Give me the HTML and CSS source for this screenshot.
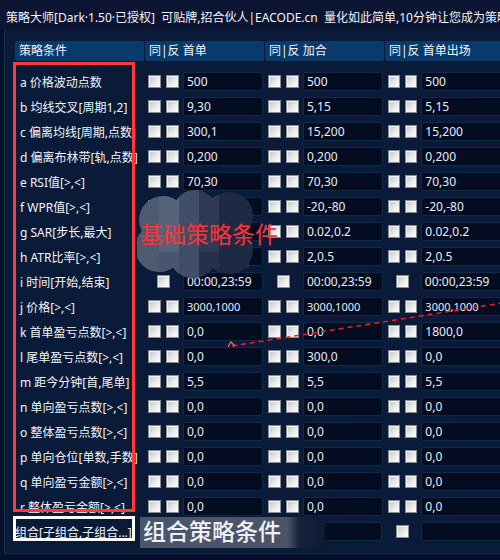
FILE: index.html
```html
<!DOCTYPE html>
<html lang="zh-CN">
<head>
    <meta charset="UTF-8">
    <title>策略大师</title>
    <link rel="stylesheet" href="styles.css">
</head>
<body>
    <div class="titlebar">策略大师[Dark·1.50·已授权]&nbsp; 可贴牌,招合伙人|EACODE.cn&nbsp; 量化如此简单,10分钟让您成为策略大师</div>

    <div class="panel">
        <div class="head">
            <div class="head-cell">策略条件</div>
            <div class="head-cell">同|反 首单</div>
            <div class="head-cell">同|反 加合</div>
            <div class="head-cell">同|反 首单出场</div>
        </div>

        <div class="rows">
            <div class="row">
                <div class="label">a 价格波动点数</div>
                <div class="grp"><span class="cb"></span><span class="cb"></span><span class="inp">500</span></div>
                <div class="grp"><span class="cb"></span><span class="cb"></span><span class="inp">500</span></div>
                <div class="grp"><span class="cb"></span><span class="cb"></span><span class="inp">500</span></div>
            </div>
            <div class="row">
                <div class="label">b 均线交叉[周期1,2]</div>
                <div class="grp"><span class="cb"></span><span class="cb"></span><span class="inp">9,30</span></div>
                <div class="grp"><span class="cb"></span><span class="cb"></span><span class="inp">5,15</span></div>
                <div class="grp"><span class="cb"></span><span class="cb"></span><span class="inp">5,15</span></div>
            </div>
            <div class="row">
                <div class="label">c 偏离均线[周期,点数]</div>
                <div class="grp"><span class="cb"></span><span class="cb"></span><span class="inp">300,1</span></div>
                <div class="grp"><span class="cb"></span><span class="cb"></span><span class="inp">15,200</span></div>
                <div class="grp"><span class="cb"></span><span class="cb"></span><span class="inp">15,200</span></div>
            </div>
            <div class="row">
                <div class="label">d 偏离布林带[轨,点数]</div>
                <div class="grp"><span class="cb"></span><span class="cb"></span><span class="inp">0,200</span></div>
                <div class="grp"><span class="cb"></span><span class="cb"></span><span class="inp">0,200</span></div>
                <div class="grp"><span class="cb"></span><span class="cb"></span><span class="inp">0,200</span></div>
            </div>
            <div class="row">
                <div class="label">e RSI值[&gt;,&lt;]</div>
                <div class="grp"><span class="cb"></span><span class="cb"></span><span class="inp">70,30</span></div>
                <div class="grp"><span class="cb"></span><span class="cb"></span><span class="inp">70,30</span></div>
                <div class="grp"><span class="cb"></span><span class="cb"></span><span class="inp">70,30</span></div>
            </div>
            <div class="row">
                <div class="label">f WPR值[&gt;,&lt;]</div>
                <div class="grp"><span class="cb"></span><span class="cb"></span><span class="inp">-20,-80</span></div>
                <div class="grp"><span class="cb"></span><span class="cb"></span><span class="inp">-20,-80</span></div>
                <div class="grp"><span class="cb"></span><span class="cb"></span><span class="inp">-20,-80</span></div>
            </div>
            <div class="row">
                <div class="label">g SAR[步长,最大]</div>
                <div class="grp"><span class="cb"></span><span class="cb"></span><span class="inp">0.02,0.2</span></div>
                <div class="grp"><span class="cb"></span><span class="cb"></span><span class="inp">0.02,0.2</span></div>
                <div class="grp"><span class="cb"></span><span class="cb"></span><span class="inp">0.02,0.2</span></div>
            </div>
            <div class="row">
                <div class="label">h ATR比率[&gt;,&lt;]</div>
                <div class="grp"><span class="cb"></span><span class="cb"></span><span class="inp">2,0.5</span></div>
                <div class="grp"><span class="cb"></span><span class="cb"></span><span class="inp">2,0.5</span></div>
                <div class="grp"><span class="cb"></span><span class="cb"></span><span class="inp">2,0.5</span></div>
            </div>
            <div class="row">
                <div class="label">i 时间[开始,结束]</div>
                <div class="grp"><span class="cb-slot"><span class="cb"></span></span><span class="inp">00:00,23:59</span></div>
                <div class="grp"><span class="cb-slot"><span class="cb"></span></span><span class="inp">00:00,23:59</span></div>
                <div class="grp"><span class="cb-slot"><span class="cb"></span></span><span class="inp">00:00,23:59</span></div>
            </div>
            <div class="row">
                <div class="label">j 价格[&gt;,&lt;]</div>
                <div class="grp"><span class="cb"></span><span class="cb"></span><span class="inp small">3000,1000</span></div>
                <div class="grp"><span class="cb"></span><span class="cb"></span><span class="inp small">3000,1000</span></div>
                <div class="grp"><span class="cb"></span><span class="cb"></span><span class="inp small">3000,1000</span></div>
            </div>
            <div class="row">
                <div class="label">k 首单盈亏点数[&gt;,&lt;]</div>
                <div class="grp"><span class="cb"></span><span class="cb"></span><span class="inp">0,0</span></div>
                <div class="grp"><span class="cb"></span><span class="cb"></span><span class="inp">0,0</span></div>
                <div class="grp"><span class="cb"></span><span class="cb"></span><span class="inp">1800,0</span></div>
            </div>
            <div class="row">
                <div class="label">l 尾单盈亏点数[&gt;,&lt;]</div>
                <div class="grp"><span class="cb"></span><span class="cb"></span><span class="inp">0,0</span></div>
                <div class="grp"><span class="cb"></span><span class="cb"></span><span class="inp">300,0</span></div>
                <div class="grp"><span class="cb"></span><span class="cb"></span><span class="inp">0,0</span></div>
            </div>
            <div class="row">
                <div class="label">m 距今分钟[首,尾单]</div>
                <div class="grp"><span class="cb"></span><span class="cb"></span><span class="inp">5,5</span></div>
                <div class="grp"><span class="cb"></span><span class="cb"></span><span class="inp">5,5</span></div>
                <div class="grp"><span class="cb"></span><span class="cb"></span><span class="inp">5,5</span></div>
            </div>
            <div class="row">
                <div class="label">n 单向盈亏点数[&gt;,&lt;]</div>
                <div class="grp"><span class="cb"></span><span class="cb"></span><span class="inp">0,0</span></div>
                <div class="grp"><span class="cb"></span><span class="cb"></span><span class="inp">0,0</span></div>
                <div class="grp"><span class="cb"></span><span class="cb"></span><span class="inp">0,0</span></div>
            </div>
            <div class="row">
                <div class="label">o 整体盈亏点数[&gt;,&lt;]</div>
                <div class="grp"><span class="cb"></span><span class="cb"></span><span class="inp">0,0</span></div>
                <div class="grp"><span class="cb"></span><span class="cb"></span><span class="inp">0,0</span></div>
                <div class="grp"><span class="cb"></span><span class="cb"></span><span class="inp">0,0</span></div>
            </div>
            <div class="row">
                <div class="label">p 单向仓位[单数,手数]</div>
                <div class="grp"><span class="cb"></span><span class="cb"></span><span class="inp">0,0</span></div>
                <div class="grp"><span class="cb"></span><span class="cb"></span><span class="inp">0,0</span></div>
                <div class="grp"><span class="cb"></span><span class="cb"></span><span class="inp">0,0</span></div>
            </div>
            <div class="row">
                <div class="label">q 单向盈亏金额[&gt;,&lt;]</div>
                <div class="grp"><span class="cb"></span><span class="cb"></span><span class="inp">0,0</span></div>
                <div class="grp"><span class="cb"></span><span class="cb"></span><span class="inp">0,0</span></div>
                <div class="grp"><span class="cb"></span><span class="cb"></span><span class="inp">0,0</span></div>
            </div>
            <div class="row">
                <div class="label">r 整体盈亏金额[&gt;,&lt;]</div>
                <div class="grp"><span class="cb"></span><span class="cb"></span><span class="inp">0,0</span></div>
                <div class="grp"><span class="cb"></span><span class="cb"></span><span class="inp">0,0</span></div>
                <div class="grp"><span class="cb"></span><span class="cb"></span><span class="inp">0,0</span></div>
            </div>
            <div class="row combo">
                <div class="label">组合[子组合,子组合...]</div>
                <div class="grp wide"><span class="inp"></span></div>
                <div class="grp"><span class="cb-slot"><span class="cb"></span></span><span class="inp"></span></div>
            </div>
        </div>
    </div>

    <!-- annotations drawn over the form -->
    <div class="mark-red"></div>
    <div class="mark-white"></div>

    <svg class="smudge" width="120" height="90" viewBox="0 0 120 90">
        <defs>
            <clipPath id="cloud">
                <circle cx="26" cy="30" r="24"/>
                <circle cx="58" cy="22" r="22"/>
                <circle cx="92" cy="26" r="24"/>
                <circle cx="22" cy="58" r="24"/>
                <circle cx="56" cy="64" r="24"/>
                <circle cx="92" cy="60" r="24"/>
                <rect x="12" y="12" width="100" height="66"/>
            </clipPath>
        </defs>
        <g clip-path="url(#cloud)">
            <rect x="0" y="0" width="22" height="90" fill="#4d5a72"/>
            <rect x="22" y="0" width="20" height="90" fill="#56637b"/>
            <rect x="22" y="62" width="20" height="28" fill="#48556d"/>
            <rect x="42" y="0" width="20" height="90" fill="#414e67"/>
            <rect x="62" y="0" width="20" height="90" fill="#2e3a54"/>
            <rect x="82" y="0" width="38" height="90" fill="#1e2a44"/>
            <rect x="62" y="62" width="20" height="28" fill="#25314b"/>
        </g>
    </svg>
    <div class="note-red">基础策略条件</div>

    <div class="note-box"></div>
    <div class="note-white">组合策略条件</div>

    <svg class="pointer" width="280" height="60" viewBox="0 0 280 60">
        <line x1="4" y1="50" x2="280" y2="6" stroke="#ff1a1a" stroke-width="1.5" stroke-dasharray="5 4"/>
        <polyline points="0,51 3,46 7,50" fill="none" stroke="#ff6a6a" stroke-width="1.2"/>
    </svg>
</body>
</html>
```

FILE: styles.css
```css
:root {
    --body-bg: #07102a;
    --title-bg: #0c1531;
    --panel-bg: #0a1a39;
    --panel-border: #172b4c;
    --head-bg: #083b6b;
    --input-bg: #040c21;
    --input-border: #0d2d46;
    --text: #f2f4f8;
    --value: #e4edfb;
}

html, body {
    margin: 0;
    padding: 0;
}

body {
    position: relative;
    width: 500px;
    height: 560px;
    overflow: hidden;
    background-color: var(--body-bg);
    color: var(--text);
    font-family: "Noto Sans", "Noto Sans CJK SC", sans-serif;
    font-size: 12px;
}

.titlebar {
    height: 30px;
    line-height: 36px;
    padding-left: 6px;
    background-color: var(--title-bg);
    white-space: nowrap;
    overflow: hidden;
}

.panel {
    margin-left: 4px;
    height: 524px;
    padding: 10px 0 0 10px;
    box-sizing: border-box;
    border-left: 1px solid var(--panel-border);
    border-bottom: 1px solid var(--panel-border);
    background-color: var(--panel-bg);
}

.head {
    display: grid;
    grid-template-columns: 130px 120px 120px 120px;
    height: 20px;
    margin-top: 1px;
}

.head-cell {
    background-color: var(--head-bg);
    margin-right: 1px;
    padding-left: 4px;
    line-height: 20px;
    border-radius: 2px;
    white-space: nowrap;
}

.rows {
    margin-top: 8px;
}

.row {
    display: grid;
    grid-template-columns: 130px 120px 120px 120px;
    height: 25px;
    align-items: center;
}

.label {
    padding-left: 5px;
    white-space: nowrap;
    overflow: hidden;
    width: 120px;
}

.combo .label {
    padding-left: 0;
}

.grp {
    display: flex;
    align-items: center;
    padding-left: 3px;
}

.grp.wide {
    grid-column: span 2;
}

.cb {
    width: 13px;
    height: 13px;
    box-sizing: border-box;
    border: 1px solid #8c8c8c;
    background: linear-gradient(135deg, #bfc2c6 0%, #e9eaec 55%, #ffffff 100%);
    box-shadow: inset 1px 1px 0 #f4f4f4;
}

.cb + .cb {
    margin-left: 5px;
}

.cb-slot {
    width: 31px;
    display: flex;
    justify-content: center;
}

.inp {
    margin-left: 4px;
    width: 80px;
    height: 19px;
    box-sizing: border-box;
    border: 1px solid var(--input-border);
    border-radius: 2px;
    background-color: var(--input-bg);
    color: var(--value);
    padding-left: 3px;
    line-height: 17px;
    white-space: nowrap;
    overflow: hidden;
}

.inp.small {
    font-size: 11px;
}

.grp.wide .inp {
    width: 234px;
    margin-left: 0;
}

.grp:last-child .inp {
    width: 90px;
}

.mark-red {
    position: absolute;
    left: 13px;
    top: 62px;
    width: 122px;
    height: 450px;
    box-sizing: border-box;
    border: 3px solid #ff3838;
}

.mark-white {
    position: absolute;
    left: 13px;
    top: 516px;
    width: 122px;
    height: 25px;
    box-sizing: border-box;
    border: 3px solid #ffffff;
}

.smudge {
    position: absolute;
    left: 137px;
    top: 190px;
}

.note-red {
    position: absolute;
    left: 140px;
    top: 219px;
    font-size: 23px;
    line-height: 30px;
    color: #ff3333;
    white-space: nowrap;
}

.note-box {
    position: absolute;
    left: 140px;
    top: 517px;
    width: 185px;
    height: 31px;
    background: linear-gradient(90deg, #4c566b 0%, #4a5468 80%, #16223a 86%, #0e1a33 100%);
}

.note-white {
    position: absolute;
    left: 143px;
    top: 515px;
    font-size: 23px;
    line-height: 32px;
    font-weight: 500;
    color: #eef1f6;
    white-space: nowrap;
}

.pointer {
    position: absolute;
    left: 228px;
    top: 296px;
}
```
